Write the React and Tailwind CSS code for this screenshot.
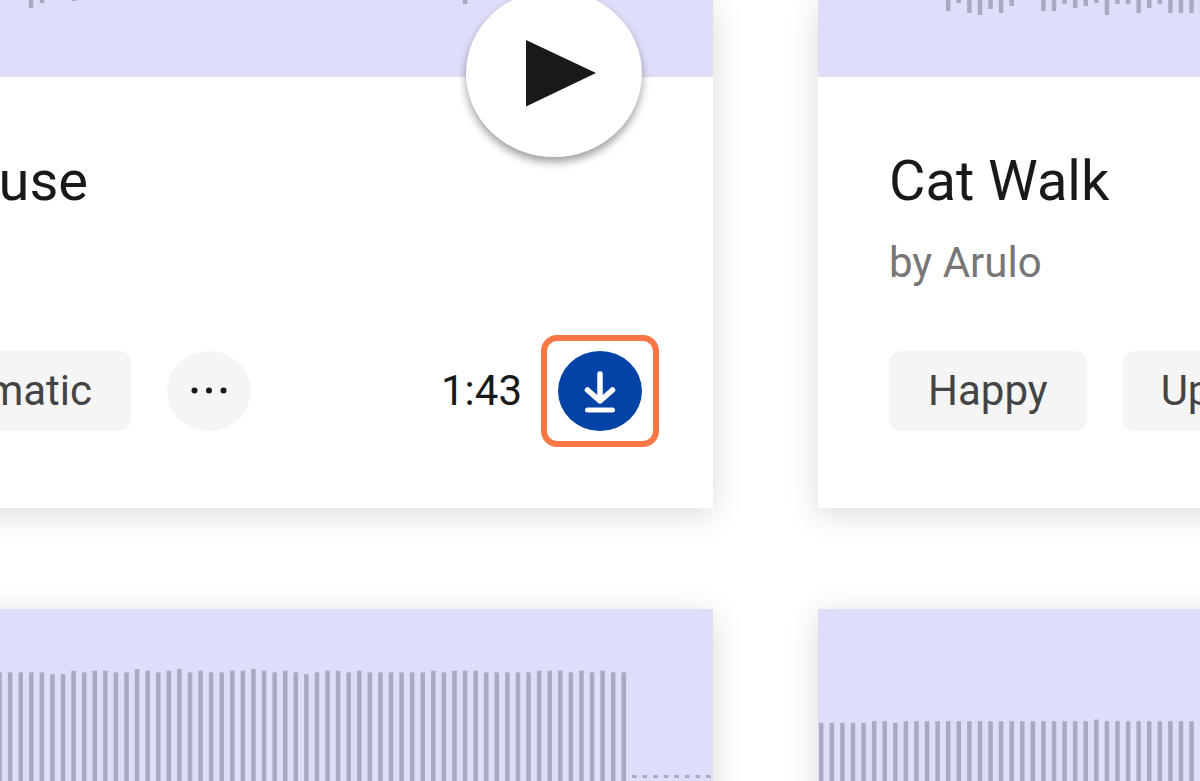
const PITCH = 10.58;

// bar tops / bottoms, one entry per bar slot
const LEFT_LEVELS = '222223312112201210212211012123211212222221211122222111212122';
const RIGHT_LEVELS = '222221121111111111111111110111111111';
const CATWALK_TAIL = [
  11, 3, 13, 15, 9, 13, 6, 0, 0, 11, 11, 4, 8, 6, 3, 15, 4, 4, 13, 8, 4, 13, 13, 13, 13,
];

const Bar = ({ x, y, height }) => (
  <rect x={x - 2.2} y={y} width="4.5" height={height} fill="#a9a9c1" />
);

const tops = (levels, start, base) =>
  levels.split('').map((level, i) => ({
    x: start + i * PITCH,
    y: base + Number(level) * 1.7,
    height: 200,
  }));

const houseBars = [
  { x: 31, y: 0, height: 8 },
  { x: 42, y: 0, height: 3 },
  { x: 74, y: 0, height: 1 },
  { x: 465, y: 0, height: 4 },
];

const catWalkBars = CATWALK_TAIL.map((height, i) => ({
  x: 3.2 + (i + 12) * PITCH,
  y: 0,
  height,
}));

const silentBars = Array.from({ length: 8 }, (_, i) => ({
  x: 634.3 + i * PITCH,
  y: 166,
  height: 3,
}));

const leftBars = [...tops(LEFT_LEVELS, -0.5, 60), ...silentBars];
const rightBars = tops(RIGHT_LEVELS, 3.2, 110.5);

const Waveform = ({ bars, className }) => (
  <div className={`bg-[#dedef9] ${className}`}>
    <svg className="block h-full w-full" aria-hidden="true">
      {bars.map((bar) => (
        <Bar key={bar.x} {...bar} />
      ))}
    </svg>
  </div>
);

const Card = ({ children }) => (
  <article className="relative min-w-0 bg-white shadow-[0_6px_30px_rgba(0,0,0,0.15)]">
    {children}
  </article>
);

const Tag = ({ children, className = '' }) => (
  <a
    href="#tag"
    className={`flex h-20 shrink-0 items-center rounded-xl bg-[#f5f5f5] px-[39px] text-[42px] leading-12 text-[#444] ${className}`}
  >
    {children}
  </a>
);

const PlayButton = () => (
  <button
    type="button"
    aria-label="Play"
    className="absolute -top-[10px] right-[71px] h-[167px] w-[176px] rounded-[50%] bg-white shadow-[0_5px_8px_rgba(0,0,0,0.38)]"
  >
    <svg className="h-full w-full" viewBox="0 0 176 167" aria-hidden="true">
      <path d="M60 50 L130 83 L60 116.500 Z" fill="#191919" />
    </svg>
  </button>
);

const DownloadButton = () => (
  <button
    type="button"
    aria-label="Download"
    className="relative h-20 w-[84px] shrink-0 rounded-[50%] bg-[#0343a5]"
  >
    <svg
      className="h-full w-full"
      viewBox="0 0 84 80"
      fill="none"
      stroke="#fff"
      strokeLinecap="round"
      strokeLinejoin="round"
      aria-hidden="true"
    >
      <path d="M42 23 V50 M29.500 39 L42 50 L54.500 39" strokeWidth="5.500" />
      <path d="M29.500 59 H54.500" strokeWidth="5" />
    </svg>
    <span className="absolute -inset-x-[17px] -inset-y-4 rounded-2xl border-6 border-[#fb7645]" />
  </button>
);

const MoreButton = () => (
  <button
    type="button"
    aria-label="More tags"
    className="h-20 w-[84px] shrink-0 rounded-[50%] bg-[#f5f5f5]"
  >
    <svg className="h-full w-full" viewBox="0 0 84 80" fill="#191919" aria-hidden="true">
      <circle cx="27.500" cy="39.500" r="3" />
      <circle cx="42" cy="39.500" r="3" />
      <circle cx="56.500" cy="39.500" r="3" />
    </svg>
  </button>
);

export default function App() {
  return (
    <main className="h-screen overflow-hidden bg-white font-[Roboto,sans-serif]">
      {/* the grid runs past both sides of the window */}
      <div className="-mx-16 grid grid-cols-[777fr_446fr] gap-x-[105px] gap-y-[101px]">
        <Card>
          <Waveform bars={houseBars} className="h-[77px] pl-16" />
          <PlayButton />
          <div className="pt-[72px] pr-[71px] pb-[77px]">
            <h2 className="flex w-[152px] justify-end text-[56px] leading-16 text-[#191919]">
              use
            </h2>
            <div className="mt-[26px] h-12" />
            <div className="mt-16 flex items-center">
              <Tag className="w-[195px] justify-end">matic</Tag>
              <div className="ml-9 flex">
                <MoreButton />
              </div>
              <span className="mr-9 ml-auto text-[42px] leading-12 text-[#191919]">1:43</span>
              <DownloadButton />
            </div>
          </div>
        </Card>

        <Card>
          <Waveform bars={catWalkBars} className="h-[77px]" />
          <div className="pt-[72px] pb-[77px] pl-[71px]">
            <h2 className="text-[56px] leading-16 whitespace-nowrap text-[#191919]">Cat Walk</h2>
            <p className="mt-[26px] text-[42px] leading-12 text-[#777]">by Arulo</p>
            <div className="mt-16 flex items-center gap-[35px]">
              <Tag>Happy</Tag>
              <Tag>Up</Tag>
            </div>
          </div>
        </Card>

        <Card>
          <Waveform bars={leftBars} className="h-[240px] pl-16" />
        </Card>
        <Card>
          <Waveform bars={rightBars} className="h-[240px]" />
        </Card>
      </div>
    </main>
  );
}
